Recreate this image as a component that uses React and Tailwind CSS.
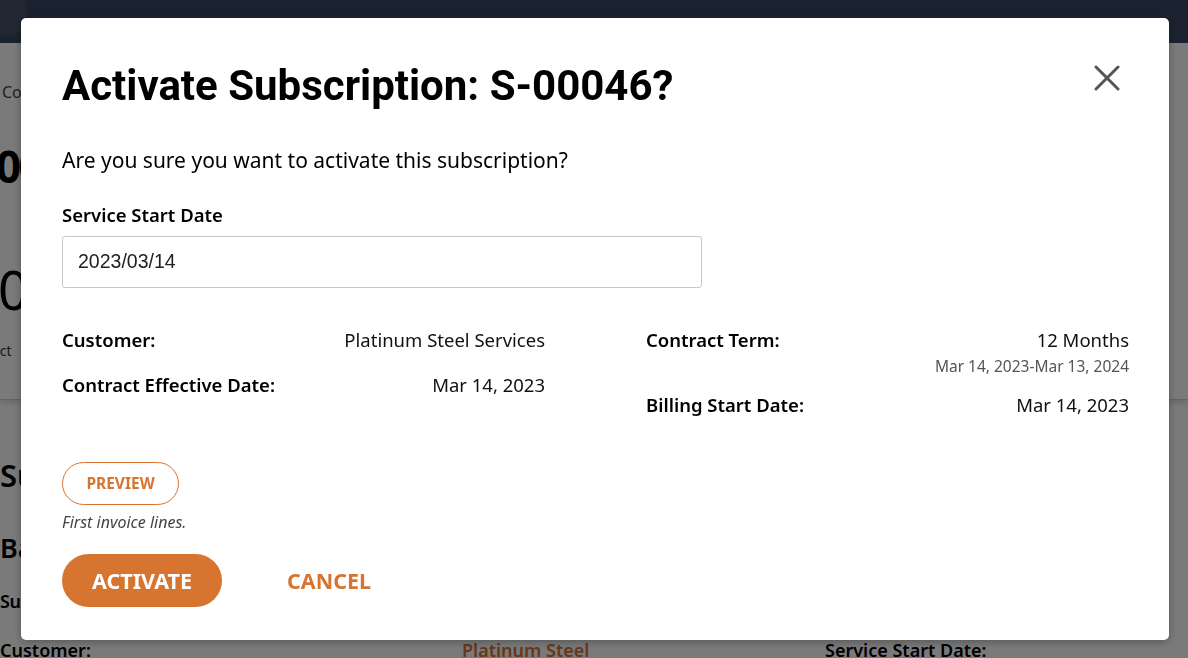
const sans = { fontFamily: '"Noto Sans", "Open Sans", sans-serif' };

function DetailRow({ label, value, sub }) {
    return (
        <div className="flex justify-between items-start">
            <span className="font-semibold text-[18.5px] text-black leading-[26px]">{label}</span>
            <div className="flex flex-col items-end">
                <span className="text-[18.5px] text-[#111] leading-[26px]">{value}</span>
                {sub && <span className="text-[15.5px] text-[#555] leading-[20px] mt-[3px]">{sub}</span>}
            </div>
        </div>
    );
}

function Background() {
    return (
        <div className="h-[658px] w-[1188px] bg-white overflow-hidden text-black" style={sans}>
            <div className="h-[43px] bg-[#3a4762] relative">
                <div className="absolute -left-[10px] -top-[12px] w-[36px] h-[48px] rounded-full bg-[#46536c]" />
            </div>
            <div className="h-[357px] border-b border-[#cfcfcf] shadow-[0_3px_6px_rgba(0,0,0,0.15)]">
                <div className="w-[21px] overflow-hidden whitespace-nowrap">
                    <div className="pt-[38px] pl-[2px] text-[16px] leading-[22px] text-[#444]">Co</div>
                    <div className="mt-[40px] -ml-[4px] text-[44px] font-bold leading-[46px] tracking-[-3px]">00</div>
                    <div className="mt-[70px] -ml-[2px] text-[54px] leading-[60px]">0.</div>
                    <div className="mt-[22px] -ml-[8px] text-[14px] leading-[20px] text-[#333]">act</div>
                </div>
            </div>
            <div className="w-[21px] overflow-hidden whitespace-nowrap">
                <div className="pt-[57px] text-[31px] font-semibold leading-[36px]">Su</div>
                <div className="mt-[40px] text-[27px] font-semibold leading-[30px]">Ba</div>
                <div className="mt-[26px] text-[18px] font-semibold leading-[24px] tracking-[-0.5px]">Sul</div>
            </div>
            <div className="mt-[25px] grid grid-cols-[462px_363px_1fr] text-[18px] font-semibold leading-[24px]">
                <span>Customer:</span>
                <span className="text-[#d77430]">Platinum Steel</span>
                <span>Service Start Date:</span>
            </div>
        </div>
    );
}

export default function App() {
    return (
        <div className="relative w-[1188px] h-[658px] overflow-hidden">
            <Background />
            <div className="fixed inset-0 bg-black/[0.52]" />
            <div
                className="fixed left-[21px] top-[18px] w-[1148px] h-[622px] bg-white rounded-[5px] shadow-[0_2px_8px_rgba(0,0,0,0.3)] pl-[41px] pr-[41px]"
                style={sans}
            >
                <div className="flex items-start justify-between pt-[43px]">
                    <h1
                        className="text-[42px] font-bold text-black leading-[50px]"
                        style={{ fontFamily: 'Roboto, "Noto Sans", sans-serif' }}
                    >
                        Activate Subscription: S-00046?
                    </h1>
                    <button className="mt-[4px] mr-[8px]">
                        <svg width="26" height="26" viewBox="0 0 26 26" fill="none" stroke="#555" strokeWidth="3" strokeLinecap="round">
                            <path d="M2 2L24 24M24 2L2 24" />
                        </svg>
                    </button>
                </div>

                <p className="mt-[35px] text-[21px] text-black leading-[28px]">
                    Are you sure you want to activate this subscription?
                </p>

                <label className="block mt-[28px] text-[18.5px] font-semibold text-black leading-[26px]">
                    Service Start Date
                </label>
                <div
                    className="mt-[8px] w-[640px] h-[52px] border border-[#c8c8c8] rounded-[3px] flex items-center px-[15px] text-[19.5px] text-[#222]"
                    style={{ fontFamily: '"Liberation Sans", Arial, sans-serif' }}
                >
                    2023/03/14
                </div>

                <div className="mt-[39px] grid grid-cols-[483px_483px] gap-x-[101px]">
                    <div className="flex flex-col gap-[19px]">
                        <DetailRow label="Customer:" value="Platinum Steel Services" />
                        <DetailRow label="Contract Effective Date:" value="Mar 14, 2023" />
                    </div>
                    <div className="flex flex-col gap-[16px]">
                        <DetailRow label="Contract Term:" value="12 Months" sub="Mar 14, 2023-Mar 13, 2024" />
                        <DetailRow label="Billing Start Date:" value="Mar 14, 2023" />
                    </div>
                </div>

                <button className="mt-[44px] w-[117px] h-[43px] rounded-full border border-[#d77430] text-[#d77430] font-bold text-[15.5px] leading-none">
                    PREVIEW
                </button>
                <p className="mt-[6px] text-[16px] italic text-[#444] leading-[22px]">First invoice lines.</p>

                <div className="mt-[21px] flex items-center gap-[65px]">
                    <button className="w-[160px] h-[53px] rounded-full bg-[#d77430] text-white font-bold text-[21.5px] leading-none">
                        ACTIVATE
                    </button>
                    <button className="text-[#d77430] font-bold text-[21.5px] leading-none">CANCEL</button>
                </div>
            </div>
        </div>
    );
}
